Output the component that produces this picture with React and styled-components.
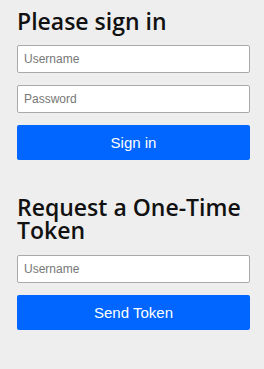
import React from 'react'
import styled, { createGlobalStyle } from 'styled-components'

const Global = createGlobalStyle`
  html, body {
    margin: 0;
    padding: 0;
    background: #eeeeee;
  }
`;

export default function App() {
  return (
    <Page>
      <Global />
      <Form>
        <Heading>Please sign in</Heading>
        <Input type="text" placeholder="Username" />
        <Input type="password" placeholder="Password" />
        <Button>Sign in</Button>
      </Form>
      <Form>
        <Heading $second>Request a One-Time Token</Heading>
        <Input type="text" placeholder="Username" />
        <Button>Send Token</Button>
      </Form>
    </Page>
  )
}

const Page = styled.div`
  min-height: 369px;
  padding: 0 14px 0 17px;
  box-sizing: border-box;
`;

const Form = styled.form`
  display: flex;
  flex-direction: column;
  gap: 12px;
  width: 233px;
`;

const Heading = styled.h2`
  margin: ${p => (p.$second ? '36px 0 1px' : '10px 0 0')};
  font-family: "Open Sans", "Noto Sans", sans-serif;
  font-weight: 600;
  font-size: 23px;
  line-height: 23px;
  color: #111;
`;

const Input = styled.input`
  box-sizing: border-box;
  height: 28px;
  width: 100%;
  margin: 0;
  padding: 0 6px;
  border: 1px solid #a9a9a9;
  border-radius: 2px;
  background: #fff;
  font-family: "Liberation Sans", Arial, sans-serif;
  font-size: 12px;
  color: #222;
  &::placeholder {
    color: #777;
  }
`;

const Button = styled.button`
  box-sizing: border-box;
  height: 35px;
  width: 100%;
  border: none;
  border-radius: 2px;
  background: #0066ff;
  color: #fff;
  font-family: "Liberation Sans", Arial, sans-serif;
  font-size: 15px;
  cursor: pointer;
`;
